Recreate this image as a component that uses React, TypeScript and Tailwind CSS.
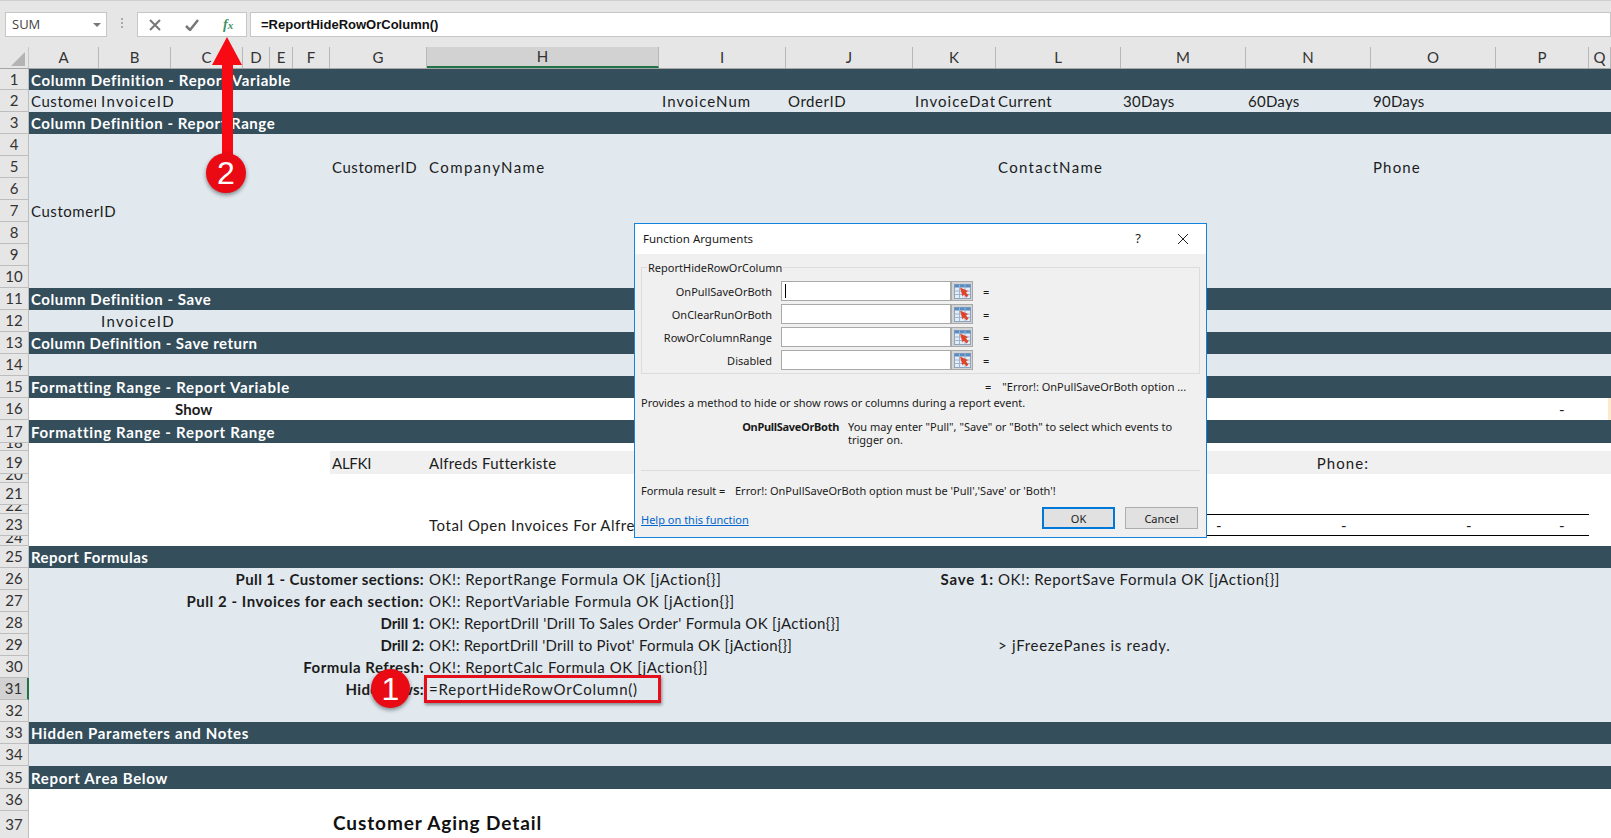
import React from 'react';

// column widths in px, from the row-header edge to the window edge
const columns = [
  { name: 'A', width: 70 },
  { name: 'B', width: 72 },
  { name: 'C', width: 72 },
  { name: 'D', width: 27 },
  { name: 'E', width: 23 },
  { name: 'F', width: 37 },
  { name: 'G', width: 97 },
  { name: 'H', width: 232 },
  { name: 'I', width: 127 },
  { name: 'J', width: 127 },
  { name: 'K', width: 83 },
  { name: 'L', width: 125 },
  { name: 'M', width: 125 },
  { name: 'N', width: 125 },
  { name: 'O', width: 125 },
  { name: 'P', width: 93 },
  { name: 'Q', width: 22 },
];

type Cell = {
  col: string;
  text: string;
  right?: boolean;
  bold?: boolean;
  clip?: boolean;
  pad?: string;
  track?: string;
};

type Row = {
  n: number;
  h: number;
  tone: 'dark' | 'light' | 'white';
  cells?: Cell[];
};

const head = (text: string, track: string): Cell[] => [{ col: 'A', text, bold: true, track }];

const rows: Row[] = [
  { n: 1, h: 21, tone: 'dark', cells: head('Column Definition - Report Variable', 'tracking-[0.63px]') },
  {
    n: 2,
    h: 22,
    tone: 'light',
    cells: [
      { col: 'A', text: 'CustomerID', clip: true, pad: 'mr-[3px]' },
      { col: 'B', text: 'InvoiceID', track: 'tracking-[1.3px]' },
      { col: 'I', text: 'InvoiceNum', track: 'tracking-[1.05px]', pad: 'pl-[3px]' },
      { col: 'J', text: 'OrderID' },
      { col: 'K', text: 'InvoiceDate', clip: true, track: 'tracking-[1.05px]', pad: 'mr-[1px]' },
      { col: 'L', text: 'Current' },
      { col: 'M', text: '30Days', track: 'tracking-[0.25px]' },
      { col: 'N', text: '60Days', track: 'tracking-[0.25px]' },
      { col: 'O', text: '90Days', track: 'tracking-[0.25px]' },
    ],
  },
  { n: 3, h: 22, tone: 'dark', cells: head('Column Definition - Report Range', 'tracking-[0.58px]') },
  { n: 4, h: 22, tone: 'light' },
  {
    n: 5,
    h: 22,
    tone: 'light',
    cells: [
      { col: 'G', text: 'CustomerID' },
      { col: 'H', text: 'CompanyName', track: 'tracking-[1.4px]' },
      { col: 'L', text: 'ContactName', track: 'tracking-[1.3px]' },
      { col: 'O', text: 'Phone', track: 'tracking-[1.15px]' },
    ],
  },
  { n: 6, h: 22, tone: 'light' },
  { n: 7, h: 22, tone: 'light', cells: [{ col: 'A', text: 'CustomerID' }] },
  { n: 8, h: 22, tone: 'light' },
  { n: 9, h: 22, tone: 'light' },
  { n: 10, h: 22, tone: 'light' },
  { n: 11, h: 22, tone: 'dark', cells: head('Column Definition - Save', 'tracking-[0.58px]') },
  { n: 12, h: 22, tone: 'light', cells: [{ col: 'B', text: 'InvoiceID', track: 'tracking-[1.3px]' }] },
  { n: 13, h: 22, tone: 'dark', cells: head('Column Definition - Save return', 'tracking-[0.48px]') },
  { n: 14, h: 22, tone: 'light' },
  { n: 15, h: 22, tone: 'dark', cells: head('Formatting Range - Report Variable', 'tracking-[0.73px]') },
  {
    n: 16,
    h: 22,
    tone: 'white',
    cells: [
      { col: 'C', text: 'Show', bold: true, track: 'tracking-[0.1px]', pad: 'pl-[4px]' },
      { col: 'P', text: '-', right: true, pad: 'pr-[24px]' },
    ],
  },
  { n: 17, h: 23, tone: 'dark', cells: head('Formatting Range - Report Range', 'tracking-[0.72px]') },
  { n: 18, h: 8, tone: 'white' },
  {
    n: 19,
    h: 23,
    tone: 'white',
    cells: [
      { col: 'G', text: 'ALFKI', track: 'tracking-[-0.25px]' },
      { col: 'H', text: 'Alfreds Futterkiste', track: 'tracking-[0.28px]' },
      { col: 'N', text: 'Phone:', right: true, track: 'tracking-[1.05px]' },
    ],
  },
  { n: 20, h: 9, tone: 'white' },
  { n: 21, h: 22, tone: 'white' },
  { n: 22, h: 9, tone: 'white' },
  {
    n: 23,
    h: 22,
    tone: 'white',
    cells: [
      { col: 'H', text: 'Total Open Invoices For Alfreds Futterkiste' },
      { col: 'M', text: '-', right: true, pad: 'pr-[24px]' },
      { col: 'N', text: '-', right: true, pad: 'pr-[24px]' },
      { col: 'O', text: '-', right: true, pad: 'pr-[24px]' },
      { col: 'P', text: '-', right: true, pad: 'pr-[24px]' },
    ],
  },
  { n: 24, h: 10, tone: 'white' },
  { n: 25, h: 22, tone: 'dark', cells: head('Report Formulas', 'tracking-[0.48px]') },
  {
    n: 26,
    h: 22,
    tone: 'light',
    cells: [
      { col: 'G', text: 'Pull 1 - Customer sections:', right: true, bold: true, pad: 'pr-[3px]', track: 'tracking-[0.4px]' },
      { col: 'H', text: 'OK!: ReportRange Formula OK [jAction{}]' },
      { col: 'K', text: 'Save 1:', right: true, bold: true, track: 'tracking-[0.85px]' },
      { col: 'L', text: 'OK!: ReportSave Formula OK [jAction{}]' },
    ],
  },
  {
    n: 27,
    h: 22,
    tone: 'light',
    cells: [
      { col: 'G', text: 'Pull 2 - Invoices for each section:', right: true, bold: true, pad: 'pr-[3px]' },
      { col: 'H', text: 'OK!: ReportVariable Formula OK [jAction{}]' },
    ],
  },
  {
    n: 28,
    h: 22,
    tone: 'light',
    cells: [
      { col: 'G', text: 'Drill 1:', right: true, bold: true, pad: 'pr-[3px]', track: 'tracking-[-0.1px]' },
      { col: 'H', text: "OK!: ReportDrill 'Drill To Sales Order' Formula OK [jAction{}]", track: 'tracking-[0.28px]' },
    ],
  },
  {
    n: 29,
    h: 22,
    tone: 'light',
    cells: [
      { col: 'G', text: 'Drill 2:', right: true, bold: true, pad: 'pr-[3px]', track: 'tracking-[-0.1px]' },
      { col: 'H', text: "OK!: ReportDrill 'Drill to Pivot' Formula OK [jAction{}]", track: 'tracking-[0.23px]' },
      { col: 'L', text: '> jFreezePanes is ready.', track: 'tracking-[0.7px]' },
    ],
  },
  {
    n: 30,
    h: 22,
    tone: 'light',
    cells: [
      { col: 'G', text: 'Formula Refresh:', right: true, bold: true, pad: 'pr-[3px]', track: 'tracking-[0.5px]' },
      { col: 'H', text: 'OK!: ReportCalc Formula OK [jAction{}]' },
    ],
  },
  {
    n: 31,
    h: 22,
    tone: 'light',
    cells: [
      { col: 'G', text: 'Hide Rows:', right: true, bold: true, pad: 'pr-[3px]', track: 'tracking-[0.3px]' },
      { col: 'H', text: '=ReportHideRowOrColumn()', track: 'tracking-[0.8px]' },
    ],
  },
  { n: 32, h: 22, tone: 'light' },
  { n: 33, h: 22, tone: 'dark', cells: head('Hidden Parameters and Notes', 'tracking-[0.66px]') },
  { n: 34, h: 22, tone: 'light' },
  { n: 35, h: 23, tone: 'dark', cells: head('Report Area Below', 'tracking-[0.67px]') },
  { n: 36, h: 22, tone: 'white' },
  { n: 37, h: 28, tone: 'white' },
];

const toneClass = {
  dark: 'bg-[#344e5c] text-white',
  light: 'bg-[#e1e9ef] text-[#1c1c1c]',
  white: 'bg-white text-[#1c1c1c]',
};

const gridCols =
  'grid grid-rows-[100%] grid-cols-[70px_72px_72px_27px_23px_37px_97px_232px_127px_127px_83px_125px_125px_125px_125px_93px_22px]';

const bandCols = ['G', 'H', 'I', 'J', 'K', 'L', 'M', 'N', 'O', 'P', 'Q'];
const ruleCols = ['I', 'J', 'K', 'L', 'M', 'N', 'O', 'P'];

const RowCells: React.FC<{ row: Row }> = ({ row }) => (
  <div className={`${gridCols} h-full`}>
    {columns.map((c) => {
      const cell = row.cells?.find((x) => x.col === c.name);
      const band = row.n === 19 && bandCols.includes(c.name);
      const ruled = row.n === 23 && ruleCols.includes(c.name);
      return (
        <div
          key={c.name}
          className={`flex min-w-0 items-center whitespace-nowrap px-[2px] text-[15px] leading-[18px] ${
            cell?.track ?? 'tracking-[0.55px]'
          } ${cell?.right ? 'justify-end' : ''} ${cell?.clip ? 'overflow-hidden' : ''} ${
            cell?.bold ? 'font-bold' : ''
          } ${cell?.pad ?? ''} ${band ? 'bg-[#f0f0f0]' : ''} ${ruled ? 'border-y-[1.5px] border-black' : ''}`}
        >
          {cell && <span className="shrink-0">{cell.text}</span>}
          {row.n === 16 && c.name === 'Q' && <span className="-mr-[2px] ml-auto h-full w-[3px] bg-[#fdeacb]" />}
        </div>
      );
    })}
  </div>
);

const RangeIcon: React.FC = () => (
  <svg width="17" height="15" viewBox="0 0 17 15">
    <rect x="0.5" y="0.5" width="16" height="14" fill="#e4edf6" stroke="#8aa4c0" strokeWidth="1" />
    <rect x="0.5" y="0.5" width="16" height="3" fill="#5a8cc4" />
    <path d="M0.5 7h16M0.5 10.5h16M5.5 0.5v14M11 0.5v14" stroke="#9db4cc" strokeWidth="1" />
    <path d="M6 3.5l8 3.5-2 1.5 2.5 3-2 2-2.5-3-1.5 2z" fill="#e0452c" />
  </svg>
);

const ArgRow: React.FC<{ label: string; caret?: boolean }> = ({ label, caret }) => (
  <div className="flex h-[20px] items-center">
    <div className="w-[131px] pr-[1px] text-right">{label}</div>
    <div className="ml-[8px] flex h-full w-[192px] border border-[#a9a9a9]">
      <div className="flex flex-1 items-center bg-white pl-[3px]">
        {caret && <div className="h-[14px] w-[1px] bg-black" />}
      </div>
      <div className="flex w-[22px] items-center justify-center border-l-2 border-[#a9a9a9] bg-[#d4d4d4]">
        <RangeIcon />
      </div>
    </div>
    <div className="ml-[10px]">=</div>
  </div>
);

const Dialog: React.FC = () => (
  <div className="absolute left-[634px] top-[223px] flex h-[315px] w-[573px] flex-col border border-[#1284dd] bg-[#f0f0f0] font-['Noto_Sans',sans-serif] text-[11px] leading-[13px] text-[#1a1a1a]">
    <div className="flex h-[30px] shrink-0 items-center bg-white pb-[1px] pl-[8px]">
      <span className="flex-1 text-[11.5px]">Function Arguments</span>
      <span className="w-[20px] text-center text-[13px]">?</span>
      <svg className="ml-[29px] mr-[17px]" width="12" height="12" viewBox="0 0 12 12">
        <path d="M1 1l10 10M11 1L1 11" stroke="#222" strokeWidth="1" fill="none" />
      </svg>
    </div>
    <div className="flex flex-1 flex-col px-[6px]">
      <div className="relative mt-[13px] flex h-[107px] flex-col gap-[3px] border border-[#dcdcdc] pt-[13px]">
        <span className="absolute left-[5px] top-[-7px] bg-[#f0f0f0] px-[1px]">ReportHideRowOrColumn</span>
        <ArgRow label="OnPullSaveOrBoth" caret />
        <ArgRow label="OnClearRunOrBoth" />
        <ArgRow label="RowOrColumnRange" />
        <ArgRow label="Disabled" />
      </div>
      <div className="mt-[6px] flex h-[13px] pl-[344px]">
        <span>=</span>
        <span className="ml-[11px]">"Error!: OnPullSaveOrBoth option ...</span>
      </div>
      <div className="mt-[3px]">Provides a method to hide or show rows or columns during a report event.</div>
      <div className="mt-[11px] flex">
        <div className="w-[198px] text-right font-bold tracking-[-0.3px]">OnPullSaveOrBoth</div>
        <div className="ml-[9px] w-[330px]">
          You may enter "Pull", "Save" or "Both" to select which events to trigger on.
        </div>
      </div>
      <div className="mt-[24px] border-t border-[#dcdcdc]" />
      <div className="mt-[13px] flex">
        <span className="w-[94px]">Formula result =</span>
        <span>Error!: OnPullSaveOrBoth option must be 'Pull','Save' or 'Both'!</span>
      </div>
      <div className="mt-[10px] flex items-start pr-[2px]">
        <a className="mt-[6px] flex-1 text-[#0066cc] underline">Help on this function</a>
        <button className="h-[22px] w-[73px] border-2 border-[#0078d7] bg-[#e1e1e1]">OK</button>
        <button className="ml-[10px] h-[22px] w-[73px] border border-[#adadad] bg-[#e1e1e1]">Cancel</button>
      </div>
    </div>
  </div>
);

const Annotations: React.FC = () => (
  <>
    <svg className="absolute left-[200px] top-[30px]" width="60" height="175" viewBox="0 0 60 175">
      <path d="M27 7L12 35h10v120h11V35h9z" fill="#f80a14" />
    </svg>
    <div className="absolute left-[206px] top-[153px] flex h-[40px] w-[40px] items-center justify-center rounded-full bg-[#ea0a14] font-['Liberation_Sans',sans-serif] text-[32px] text-white shadow-[0_2px_4px_rgba(0,0,0,0.45)]">
      2
    </div>
    <div className="absolute left-[424px] top-[675px] h-[28px] w-[237px] border-[3px] border-[#e3101c] shadow-[1px_2px_3px_rgba(0,0,0,0.4)]" />
    <div className="absolute left-[371px] top-[669px] flex h-[39px] w-[39px] items-center justify-center rounded-full bg-[#ea0a14] font-['Liberation_Sans',sans-serif] text-[32px] text-white shadow-[0_2px_4px_rgba(0,0,0,0.45)]">
      1
    </div>
  </>
);

const App: React.FC = () => {
  return (
    <div className="relative h-[838px] w-[1611px] overflow-hidden bg-white font-['Lato',sans-serif]">
      {/* formula bar */}
      <div className="flex h-[47px] items-start border-t border-[#d0d0d0] bg-[#e6e6e6] pl-[5px] pt-[11px]">
        <div className="flex h-[25px] w-[102px] items-center justify-between border border-[#c6c6c6] bg-white pl-[6px] pr-[5px] font-['Open_Sans',sans-serif] text-[13px] text-[#444]">
          SUM
          <span className="h-0 w-0 border-x-[4px] border-t-[4px] border-x-transparent border-t-[#777]" />
        </div>
        <div className="flex w-[30px] flex-col items-center gap-[2px] pt-[6px]">
          <span className="h-[2px] w-[2px] bg-[#aaa]" />
          <span className="h-[2px] w-[2px] bg-[#aaa]" />
          <span className="h-[2px] w-[2px] bg-[#aaa]" />
        </div>
        <div className="flex h-[25px] w-[110px] items-center border border-[#c6c6c6] bg-white">
          <svg className="ml-[11px]" width="12" height="12" viewBox="0 0 12 12">
            <path d="M1 1l10 10M11 1L1 11" stroke="#777" strokeWidth="2" fill="none" />
          </svg>
          <svg className="ml-[24px]" width="14" height="12" viewBox="0 0 14 12">
            <path d="M1 7l4 4 8-10" stroke="#777" strokeWidth="2.5" fill="none" />
          </svg>
          <span className="ml-[24px] font-['Liberation_Serif',serif] text-[14px] font-bold italic leading-none text-[#3f9365]">
            f<span className="text-[11px]">x</span>
          </span>
        </div>
        <div className="ml-[3px] flex h-[25px] flex-1 items-center border border-[#c6c6c6] bg-white pl-[10px] font-['Liberation_Sans',sans-serif] text-[13px] font-bold text-[#111]">
          =ReportHideRowOrColumn()
        </div>
      </div>

      {/* column letters */}
      <div className="flex h-[22px] border-b border-[#a6a6a6] bg-[#e6e6e6]">
        <div className="flex w-[29px] items-end justify-end border-r border-[#c6c6c6] pb-[2px] pr-[3px]">
          <span className="h-0 w-0 border-b-[14px] border-l-[14px] border-b-[#b4b4b4] border-l-transparent" />
        </div>
        <div className={`${gridCols} flex-1`}>
          {columns.map((c) => (
            <div
              key={c.name}
              className={`flex items-center justify-center border-r border-[#b8b8b8] text-[15px] leading-none text-[#333] ${
                c.name === 'H' ? 'border-b-2 border-b-[#217346] bg-[#d2d2d2]' : ''
              }`}
            >
              {c.name}
            </div>
          ))}
        </div>
      </div>

      {/* sheet rows */}
      {rows.map((row) => (
        <div key={row.n} className="flex overflow-hidden" style={{ height: row.h }}>
          <div
            className={`flex w-[29px] shrink-0 justify-center overflow-hidden border-b border-[#bdbdbd] text-[15px] leading-none text-[#333] ${
              row.h < 12 ? 'items-end' : 'items-center'
            } ${row.n === 31 ? 'border-r-2 border-r-[#217346] bg-[#d2d2d2]' : 'border-r border-r-[#bdbdbd] bg-[#e6e6e6]'}`}
          >
            {row.n}
          </div>
          <div className={`flex-1 ${toneClass[row.tone]}`}>
            <RowCells row={row} />
          </div>
        </div>
      ))}

      <div className="absolute left-[333px] top-[811px] text-[19px] font-bold leading-[24px] tracking-[0.9px] text-[#111]">
        Customer Aging Detail
      </div>

      <Dialog />
      <Annotations />
    </div>
  );
};

export default App;
